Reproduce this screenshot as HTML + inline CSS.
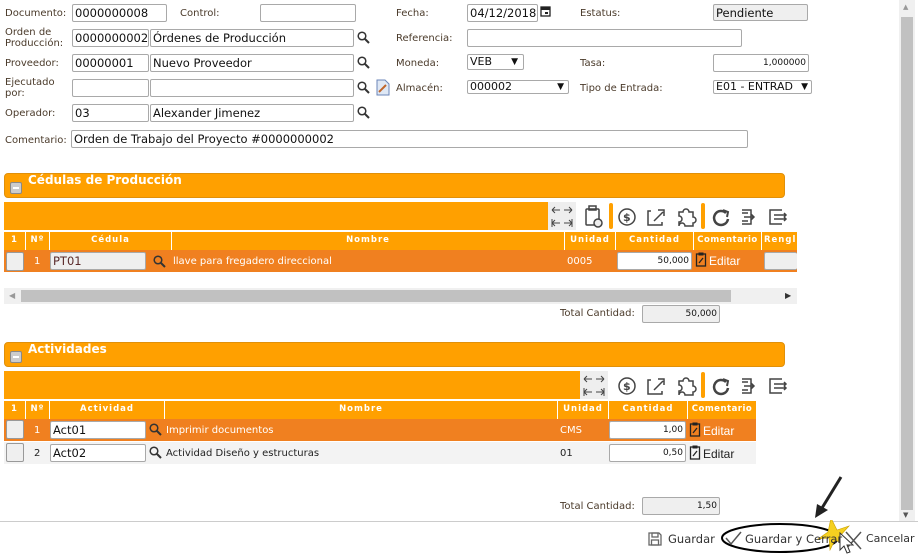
<!DOCTYPE html>
<html><head><meta charset="utf-8"><style>
*{box-sizing:border-box}
body{margin:0;width:918px;height:554px;overflow:hidden;background:#fff;font-family:"DejaVu Sans","Liberation Sans",sans-serif;font-size:10px;color:#4a3a2a;position:relative}
.a{position:absolute;white-space:nowrap}
.in{position:absolute;height:18px;border:1px solid #a9a9a9;border-radius:2px;background:#fff;font-size:11.5px;color:#111;padding:0 2px;line-height:16px;white-space:nowrap;overflow:hidden}
.g{background:#efefef}
.r{text-align:right;font-size:9px}
.lb{position:absolute;font-size:10px;color:#4a3a2a;line-height:11px}
.ph{position:absolute;left:4px;width:781px;height:25px;background:#ffa000;border:1px solid #e0900a;border-radius:4px}
.ph b{position:absolute;left:23px;top:-1px;color:#fff;font-size:12px}
.ph i{position:absolute;left:5px;top:8px;width:12px;height:12px;background:#ccc;border:1px solid #888;border-radius:2px}
.ph i:after{content:"";position:absolute;left:2px;top:4px;width:6px;height:2px;background:#fff}
.tb{position:absolute;left:4px;height:28px;background:#ffa000}
.hd{position:absolute;height:18px;background:#ffa000;color:#fff;font-weight:bold;font-size:8.5px;letter-spacing:1px;text-align:center;line-height:17px;border-right:1px solid #fff}
.row{position:absolute;left:4px;height:22px}
.cb{position:absolute;width:18px;height:19px;background:#efefef;border:1px solid #999;border-radius:2px}
.t{position:absolute;font-size:10px}
.sep{position:absolute;width:4px;height:26px;background:#ffa000;border-radius:2px}
.bt{position:absolute;top:532px;font-size:11.5px;color:#333;white-space:nowrap}
</style></head><body>
<svg width="0" height="0" style="position:absolute"><defs>
<g id="mag"><circle cx="5" cy="5" r="3.8" fill="none" stroke="#333" stroke-width="1.5"/><path d="M8 8l4 4" stroke="#333" stroke-width="2"/></g>
<g id="ed"><rect x="1.5" y="2" width="9" height="12" fill="none" stroke="#222" stroke-width="1.3"/><rect x="3.5" y="0.5" width="5" height="3" fill="#222"/><path d="M4 11l4-5" stroke="#222" stroke-width="1.3"/></g>
</defs></svg>

<div class="lb" style="left:5px;top:8px">Documento:</div>
<div class="in" style="left:72px;top:4px;width:95px">0000000008</div>
<div class="lb" style="left:180px;top:8px">Control:</div>
<div class="in" style="left:260px;top:4px;width:96px"></div>
<div class="lb" style="left:396px;top:8px">Fecha:</div>
<div class="in" style="left:467px;top:4px;width:71px">04/12/2018</div>
<svg class="a" style="left:540px;top:5px" width="11" height="12"><rect x="1" y="2" width="9" height="9" fill="none" stroke="#222" stroke-width="1.3"/><rect x="1" y="2" width="9" height="3" fill="#222"/><rect x="5" y="7" width="3" height="2" fill="#222"/></svg>
<div class="lb" style="left:580px;top:8px">Estatus:</div>
<div class="in g" style="left:713px;top:4px;width:95px;height:17px">Pendiente</div>

<div class="lb" style="left:5px;top:27px">Orden de<br>Producción:</div>
<div class="in" style="left:72px;top:29px;width:77px">0000000002</div>
<div class="in" style="left:150px;top:29px;width:204px">Órdenes de Producción</div>
<svg class="a" style="left:357px;top:31px" width="13" height="13"><use href="#mag"/></svg>
<div class="lb" style="left:396px;top:33px">Referencia:</div>
<div class="in" style="left:467px;top:29px;width:275px"></div>

<div class="lb" style="left:5px;top:58px">Proveedor:</div>
<div class="in" style="left:72px;top:54px;width:77px">00000001</div>
<div class="in" style="left:150px;top:54px;width:204px">Nuevo Proveedor</div>
<svg class="a" style="left:357px;top:56px" width="13" height="13"><use href="#mag"/></svg>
<div class="lb" style="left:396px;top:58px">Moneda:</div>
<div class="in" style="left:467px;top:54px;width:57px;height:16px;line-height:14px;font-size:11px">VEB<span style="position:absolute;right:5px;font-size:9px">▼</span></div>
<div class="lb" style="left:580px;top:58px">Tasa:</div>
<div class="in r" style="left:713px;top:54px;width:96px">1,000000</div>

<div class="lb" style="left:5px;top:77px">Ejecutado<br>por:</div>
<div class="in" style="left:72px;top:79px;width:77px"></div>
<div class="in" style="left:150px;top:79px;width:204px"></div>
<svg class="a" style="left:357px;top:81px" width="13" height="13"><use href="#mag"/></svg>
<svg class="a" style="left:375px;top:79px" width="15" height="17"><path d="M2 1h8l4 4v11H2z" fill="#dfe8f5" stroke="#6b86b8"/><path d="M4 13l7-7" stroke="#c0662a" stroke-width="2"/></svg>
<div class="lb" style="left:396px;top:83px">Almacén:</div>
<div class="in" style="left:467px;top:80px;width:102px;height:14px;line-height:12px;font-size:11px">000002<span style="position:absolute;right:4px;font-size:9px">▼</span></div>
<div class="lb" style="left:580px;top:83px">Tipo de Entrada:</div>
<div class="in" style="left:713px;top:80px;width:99px;height:14px;line-height:12px;font-size:11px">E01 - ENTRAD<span style="position:absolute;right:3px;font-size:9px">▼</span></div>

<div class="lb" style="left:5px;top:108px">Operador:</div>
<div class="in" style="left:72px;top:104px;width:77px">03</div>
<div class="in" style="left:150px;top:104px;width:204px">Alexander Jimenez</div>
<svg class="a" style="left:357px;top:106px" width="13" height="13"><use href="#mag"/></svg>

<div class="lb" style="left:5px;top:135px">Comentario:</div>
<div class="in" style="left:71px;top:130px;width:677px">Orden de Trabajo del Proyecto #0000000002</div>

<!-- Cedulas -->
<div class="ph" style="top:173px"><i></i><b>Cédulas de Producción</b></div>
<div class="tb" style="top:202px;width:544px"></div>
<div class="a" style="left:548px;top:202px;width:28px;height:28px;background:#eee"></div>
<svg class="a" style="left:548px;top:202px" width="250" height="30" fill="none" stroke="#444" stroke-width="1.5">
<path d="M4 8h8M4 8l3-3M4 8l3 3M16 8h8M24 8l-3-3M24 8l-3 3M4 21h8M4 21l3-3M4 21l3 3M4 17v8M16 21h8M24 21l-3-3M24 21l-3 3M24 17v8" stroke-width="1"/>
<rect x="38" y="7" width="13" height="16" rx="1"/><rect x="41" y="4" width="7" height="4"/><circle cx="50" cy="21" r="4" fill="#eee"/>
<circle cx="79" cy="15" r="8"/><text x="75" y="19" font-size="11" fill="#444" stroke="none" font-family="DejaVu Sans" font-weight="bold">$</text>
<path d="M103 9h-3v14h14v-3M106 19l9-9M110 8h6v6"/>
<path d="M131 10h4a3 3 0 0 1 6 0h4v5a3 3 0 0 1 0 6v3h-8a3 3 0 0 0-6 0v-4a3 3 0 0 0 0-6z"/>
<path d="M178 11a7 7 0 1 0 2 6" stroke-width="2.5"/><path d="M175 8l5 2-1 5" stroke-width="2"/>
<path d="M194 8h9v14h-9M196 15h10M203 12l3 3-3 3M194 11h6M194 19h6"/>
<path d="M234 8h-12v14h12M226 13h12M226 17h12M236 11l2 2-2 2M236 15l2 2-2 2"/>
</svg>
<div class="sep" style="left:609px;top:203px"></div><div class="sep" style="left:701px;top:203px"></div>
<div class="hd" style="left:4px;top:232px;width:22px">1</div>
<div class="hd" style="left:26px;top:232px;width:24px">Nº</div>
<div class="hd" style="left:50px;top:232px;width:122px">Cédula</div>
<div class="hd" style="left:172px;top:232px;width:393px">Nombre</div>
<div class="hd" style="left:565px;top:232px;width:51px">Unidad</div>
<div class="hd" style="left:616px;top:232px;width:78px">Cantidad</div>
<div class="hd" style="left:694px;top:232px;width:68px;letter-spacing:.5px">Comentario</div>
<div class="hd" style="left:762px;top:232px;width:35px;text-align:left;padding-left:2px;overflow:hidden;border-right:0">Rengl</div>
<div class="row" style="top:250px;width:793px;background:#f08020"></div>
<div class="cb" style="left:6px;top:252px"></div>
<div class="t" style="left:34px;top:256px;color:#fff">1</div>
<div class="in g" style="left:50px;top:252px;width:96px;color:#5a2a2a">PT01</div>
<svg class="a" style="left:153px;top:255px" width="13" height="13"><use href="#mag"/></svg>
<div class="t" style="left:173px;top:256px;color:#fff">llave para fregadero direccional</div>
<div class="t" style="left:567px;top:256px;color:#fff">0005</div>
<div class="in r" style="left:617px;top:252px;width:75px">50,000</div>
<svg class="a" style="left:695px;top:252px" width="12" height="15"><use href="#ed"/></svg>
<div class="t" style="left:709px;top:254px;color:#fff;font-family:'Liberation Sans',sans-serif;font-size:12px">Editar</div>
<div class="in g" style="left:764px;top:252px;width:33px;border-right:0"></div>
<div class="a" style="left:4px;top:288px;width:793px;height:16px;background:#f0f0f0"></div>
<div class="a" style="left:21px;top:290px;width:710px;height:12px;background:#c1c1c1"></div>
<div class="a" style="left:9px;top:291px;font-size:8px;color:#999">◀</div>
<div class="a" style="left:785px;top:291px;font-size:8px;color:#333">▶</div>
<div class="lb" style="left:560px;top:308px">Total Cantidad:</div>
<div class="in g r" style="left:642px;top:305px;width:78px">50,000</div>

<!-- Actividades -->
<div class="ph" style="top:342px"><i></i><b>Actividades</b></div>
<div class="tb" style="top:371px;width:576px"></div>
<div class="a" style="left:580px;top:371px;width:28px;height:28px;background:#eee"></div>
<svg class="a" style="left:580px;top:371px" width="218" height="30" fill="none" stroke="#444" stroke-width="1.5">
<path d="M4 8h8M4 8l3-3M4 8l3 3M16 8h8M24 8l-3-3M24 8l-3 3M4 21h8M4 21l3-3M4 21l3 3M4 17v8M16 21h8M24 21l-3-3M24 21l-3 3M24 17v8" stroke-width="1"/>
<circle cx="47" cy="15" r="8"/><text x="43" y="19" font-size="11" fill="#444" stroke="none" font-family="DejaVu Sans" font-weight="bold">$</text>
<path d="M71 9h-3v14h14v-3M74 19l9-9M78 8h6v6"/>
<path d="M99 10h4a3 3 0 0 1 6 0h4v5a3 3 0 0 1 0 6v3h-8a3 3 0 0 0-6 0v-4a3 3 0 0 0 0-6z"/>
<path d="M146 11a7 7 0 1 0 2 6" stroke-width="2.5"/><path d="M143 8l5 2-1 5" stroke-width="2"/>
<path d="M162 8h9v14h-9M164 15h10M171 12l3 3-3 3M162 11h6M162 19h6"/>
<path d="M202 8h-12v14h12M194 13h12M194 17h12M204 11l2 2-2 2M204 15l2 2-2 2"/>
</svg>
<div class="sep" style="left:701px;top:372px"></div>
<div class="hd" style="left:4px;top:401px;width:22px">1</div>
<div class="hd" style="left:26px;top:401px;width:24px">Nº</div>
<div class="hd" style="left:50px;top:401px;width:115px">Actividad</div>
<div class="hd" style="left:165px;top:401px;width:393px">Nombre</div>
<div class="hd" style="left:558px;top:401px;width:51px">Unidad</div>
<div class="hd" style="left:609px;top:401px;width:79px">Cantidad</div>
<div class="hd" style="left:688px;top:401px;width:68px;letter-spacing:.5px;border-right:0">Comentario</div>
<div class="row" style="top:419px;width:752px;background:#f08020"></div>
<div class="row" style="top:442px;width:752px;background:#f3f3f3"></div>
<div class="cb" style="left:6px;top:420px"></div>
<div class="cb" style="left:6px;top:443px"></div>
<div class="t" style="left:34px;top:425px;color:#fff">1</div>
<div class="t" style="left:34px;top:448px;color:#222">2</div>
<div class="in" style="left:50px;top:421px;width:96px">Act01</div>
<div class="in" style="left:50px;top:444px;width:96px">Act02</div>
<svg class="a" style="left:149px;top:423px" width="13" height="13"><use href="#mag"/></svg>
<svg class="a" style="left:149px;top:446px" width="13" height="13"><use href="#mag"/></svg>
<div class="t" style="left:166px;top:425px;color:#fff">Imprimir documentos</div>
<div class="t" style="left:166px;top:448px;color:#222">Actividad Diseño y estructuras</div>
<div class="t" style="left:560px;top:425px;color:#fff">CMS</div>
<div class="t" style="left:560px;top:448px;color:#222">01</div>
<div class="in r" style="left:609px;top:421px;width:77px">1,00</div>
<div class="in r" style="left:609px;top:444px;width:77px">0,50</div>
<svg class="a" style="left:689px;top:422px" width="12" height="15"><use href="#ed"/></svg>
<svg class="a" style="left:689px;top:445px" width="12" height="15"><use href="#ed"/></svg>
<div class="t" style="left:703px;top:424px;color:#fff;font-family:'Liberation Sans',sans-serif;font-size:12px">Editar</div>
<div class="t" style="left:703px;top:447px;color:#222;font-family:'Liberation Sans',sans-serif;font-size:12px">Editar</div>
<div class="lb" style="left:560px;top:501px">Total Cantidad:</div>
<div class="in g r" style="left:642px;top:497px;width:78px">1,50</div>

<!-- right scrollbar -->
<div class="a" style="left:899px;top:0;width:16px;height:521px;background:#f0f0f0"></div>
<div class="a" style="left:901px;top:17px;width:12px;height:493px;background:#c1c1c1"></div>
<div class="a" style="left:903px;top:3px;font-size:7px;color:#999">▲</div>
<div class="a" style="left:903px;top:511px;font-size:7px;color:#555">▼</div>

<!-- bottom -->
<div class="a" style="left:0;top:521px;width:918px;height:1px;background:#ccc"></div>
<svg class="a" style="left:648px;top:532px" width="14" height="14" fill="none" stroke="#666" stroke-width="1.3"><path d="M1 1h10l2 2v10H1z"/><rect x="4" y="1" width="6" height="4"/><rect x="3.5" y="8" width="7" height="5"/></svg>
<div class="bt" style="left:668px">Guardar</div>
<svg class="a" style="left:718px;top:520px" width="200" height="34">
<ellipse cx="62" cy="18" rx="58" ry="14" fill="none" stroke="#000" stroke-width="2"/>
<path d="M8 18l5 6 10-12" fill="none" stroke="#555" stroke-width="1.5"/>
<path d="M128 12l15 17M143 12l-15 17" stroke="#555" stroke-width="1.5"/>
<path d="M113 -2l6 12 12-4-9 10 8 10-13-6-5 10-1-12-11 1 10-7z" fill="#f5d020" stroke="#c9a000" stroke-width=".6"/>
<path d="M122 13v17l4-4 3 7 3-1-3-7h6z" fill="#fff" stroke="#333"/>
</svg>
<div class="bt" style="left:745px">Guardar y Cerrar</div>
<div class="bt" style="left:866px;font-size:11px">Cancelar</div>
<svg class="a" style="left:810px;top:474px" width="36" height="46"><path d="M31 3L12 34" stroke="#222" stroke-width="3"/><path d="M5 44l2-14 11 6z" fill="#222"/></svg>
</body></html>
